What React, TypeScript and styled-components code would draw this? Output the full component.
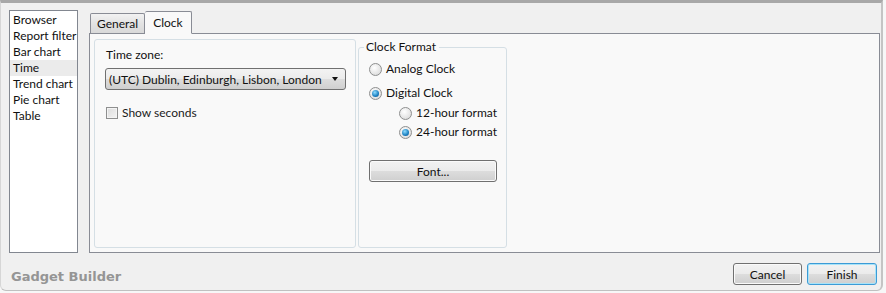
import React from "react";
import styled, { createGlobalStyle } from "styled-components";

const Global = createGlobalStyle`
  html, body { margin: 0; padding: 0; background: #f7f7f7; }
  body { font-family: Lato, "Open Sans", sans-serif; font-size: 12px; color: #1b1b1b; }
  * { box-sizing: border-box; }
`;

const Frame = styled.div`
  width: 883px;
  height: 291px;
  background: #f0f0f0;
  border-top: 3px solid #a8a8a8;
  border-left: 1px solid #d6d6d6;
  border-right: 2px solid #c4c4c4;
  border-bottom: 1px solid #c0c0c0;
  border-radius: 0 0 6px 6px;
  display: flex;
  flex-direction: column;
`;

const Main = styled.div`
  display: flex;
  padding: 7px 0 0 8px;
  gap: 11px;
  height: 250px;
`;

const List = styled.div`
  width: 69px;
  height: 243px;
  background: #fff;
  border: 1px solid #828790;
  display: flex;
  flex-direction: column;
  padding-top: 1px;
`;

const ListItem = styled.div<{ $selected?: boolean }>`
  height: 16px;
  line-height: 16px;
  padding-left: 3px;
  white-space: nowrap;
  background: ${(p) => (p.$selected ? "#ebebeb" : "transparent")};
  color: #111;
`;

const TabArea = styled.div`
  width: 791px;
  display: flex;
  flex-direction: column;
`;

const TabStrip = styled.div`
  display: flex;
  align-items: flex-end;
  height: 23px;
  padding-left: 1px;
  position: relative;
  z-index: 1;
`;

const Tab = styled.div<{ $active?: boolean }>`
  height: ${(p) => (p.$active ? "23px" : "20px")};
  padding: ${(p) => (p.$active ? "2px 8px 0 8px" : "1px 6px 0 6px")};
  border: 1px solid #898c95;
  border-bottom: ${(p) => (p.$active ? "1px solid #f9f9f9" : "none")};
  border-left: ${(p) => (p.$active ? "none" : "1px solid #898c95")};
  background: ${(p) =>
    p.$active ? "#f9f9f9" : "linear-gradient(#f2f2f2, #e3e3e3 50%, #d9d9d9)"};
  line-height: 18px;
  color: #111;
  border-radius: 2px 2px 0 0;
  margin-bottom: ${(p) => (p.$active ? "-1px" : "0")};
`;

const Panel = styled.div`
  flex: 1;
  border: 1px solid #898c95;
  background: #f9f9f9;
  display: flex;
  padding: 5px 0 4px 4px;
  gap: 2px;
  height: 220px;
`;

const GroupBox = styled.div<{ $w: number; $top?: number }>`
  width: ${(p) => p.$w}px;
  margin-top: ${(p) => p.$top ?? 0}px;
  border: 1px solid #d5dfe5;
  border-radius: 3px;
  position: relative;
  display: flex;
  flex-direction: column;
`;

const Legend = styled.div`
  position: absolute;
  top: -9px;
  left: 5px;
  padding: 0 3px 0 2px;
  background: #f9f9f9;
  line-height: 16px;
  color: #111;
`;

const LeftContent = styled.div`
  padding: 7px 0 0 10px;
  display: flex;
  flex-direction: column;
`;

const Label = styled.div`
  line-height: 16px;
  padding-left: 1px;
  color: #111;
`;

const Combo = styled.div`
  margin-top: 5px;
  width: 241px;
  height: 22px;
  border: 1px solid #707070;
  border-radius: 3px;
  background: linear-gradient(#f3f3f3, #ebebeb 50%, #dddddd 50%, #cfcfcf);
  display: flex;
  align-items: center;
  padding: 0 7px 0 3px;
  justify-content: space-between;
  color: #111;
  white-space: nowrap;
`;

const Arrow = styled.span`
  width: 0;
  height: 0;
  border-left: 3.5px solid transparent;
  border-right: 3.5px solid transparent;
  border-top: 4px solid #111;
`;

const CheckRow = styled.div`
  margin-top: 15px;
  padding-left: 1px;
  display: flex;
  align-items: center;
  gap: 4px;
  line-height: 16px;
`;

const CheckBox = styled.span`
  width: 12px;
  height: 12px;
  border: 1px solid #8e8f8f;
  background: linear-gradient(135deg, #dcdcdc, #f4f4f4);
  box-shadow: inset 0 0 0 1px #f4f4f4;
`;

const RightContent = styled.div`
  padding: 13px 0 0 10px;
  display: flex;
  flex-direction: column;
`;

const RadioRow = styled.div<{ $indent?: number; $gap: number }>`
  display: flex;
  align-items: center;
  gap: 4px;
  margin-left: ${(p) => p.$indent ?? 0}px;
  margin-top: ${(p) => p.$gap}px;
  line-height: 16px;
  color: #111;
`;

const Radio = styled.span<{ $checked?: boolean }>`
  width: 13px;
  height: 13px;
  border-radius: 50%;
  border: 1px solid #8e8f8f;
  background: radial-gradient(circle at 40% 35%, #ffffff, #d4d4d4);
  display: flex;
  align-items: center;
  justify-content: center;
  &::after {
    content: "";
    display: ${(p) => (p.$checked ? "block" : "none")};
    width: 7px;
    height: 7px;
    border-radius: 50%;
    background: radial-gradient(circle at 40% 35%, #8fdcff, #1a7fc0 60%, #0d4d86);
  }
`;

const Button = styled.div<{ $w: number; $default?: boolean }>`
  width: ${(p) => p.$w}px;
  height: 22px;
  border: 1px solid ${(p) => (p.$default ? "#3c9bd6" : "#707070")};
  border-radius: 3px;
  background: linear-gradient(#f2f2f2, #ebebeb 50%, #dddddd 50%, #cfcfcf);
  box-shadow: ${(p) => (p.$default ? "inset 0 0 0 1px #a8e3f8" : "inset 0 0 0 1px #fafafa")};
  display: flex;
  align-items: center;
  justify-content: center;
  color: #111;
`;

const FontButton = styled(Button)`
  margin-top: 20px;
`;

const Footer = styled.div`
  flex: 1;
  display: flex;
  align-items: center;
  justify-content: space-between;
  padding: 0 4px 0 10px;
`;

const Title = styled.div`
  font-family: "DejaVu Sans", Verdana, sans-serif;
  font-weight: bold;
  font-size: 13px;
  color: #959595;
  margin-top: 9px;
`;

const Buttons = styled.div`
  display: flex;
  gap: 5px;
  margin-top: 5px;
`;

const items = ["Browser", "Report filter", "Bar chart", "Time", "Trend chart", "Pie chart", "Table"];

export default function App() {
  return (
    <>
      <Global />
      <Frame>
        <Main>
          <List>
            {items.map((t) => (
              <ListItem key={t} $selected={t === "Time"}>
                {t}
              </ListItem>
            ))}
          </List>
          <TabArea>
            <TabStrip>
              <Tab>General</Tab>
              <Tab $active>Clock</Tab>
            </TabStrip>
            <Panel>
              <GroupBox $w={262}>
                <LeftContent>
                  <Label>Time zone:</Label>
                  <Combo>
                    <span>(UTC) Dublin, Edinburgh, Lisbon, London</span>
                    <Arrow />
                  </Combo>
                  <CheckRow>
                    <CheckBox />
                    <span>Show seconds</span>
                  </CheckRow>
                </LeftContent>
              </GroupBox>
              <GroupBox $w={149} $top={8}>
                <Legend>Clock Format</Legend>
                <RightContent>
                  <RadioRow $gap={0}>
                    <Radio />
                    <span>Analog Clock</span>
                  </RadioRow>
                  <RadioRow $gap={8}>
                    <Radio $checked />
                    <span>Digital Clock</span>
                  </RadioRow>
                  <RadioRow $gap={4} $indent={30}>
                    <Radio />
                    <span>12-hour format</span>
                  </RadioRow>
                  <RadioRow $gap={3} $indent={30}>
                    <Radio $checked />
                    <span>24-hour format</span>
                  </RadioRow>
                  <FontButton $w={128}>Font...</FontButton>
                </RightContent>
              </GroupBox>
            </Panel>
          </TabArea>
        </Main>
        <Footer>
          <Title>Gadget Builder</Title>
          <Buttons>
            <Button $w={69}>Cancel</Button>
            <Button $w={70} $default>Finish</Button>
          </Buttons>
        </Footer>
      </Frame>
    </>
  );
}
